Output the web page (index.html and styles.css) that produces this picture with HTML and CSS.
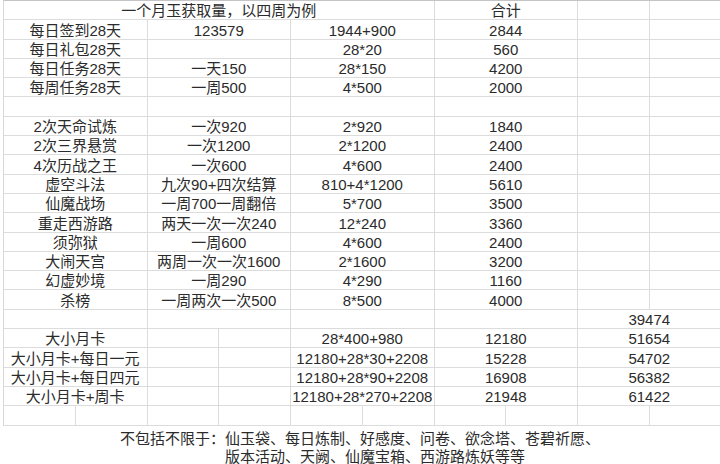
FILE: index.html
```html
<!DOCTYPE html>
<html lang="zh">
<head>
<meta charset="utf-8">
<title>一个月玉获取量</title>
<link rel="stylesheet" href="styles.css">
</head>
<body>
<div class="sheet">
  <div class="c s6">一个月玉获取量，以四周为例</div><div class="c s2">合计</div><div class="c"></div><div class="c"></div>

  <div class="c s2">每日签到28天</div><div class="c s2">123579</div><div class="c s2">1944+900</div><div class="c s2">2844</div><div class="c"></div><div class="c"></div>
  <div class="c s2">每日礼包28天</div><div class="c s2"></div><div class="c s2">28*20</div><div class="c s2">560</div><div class="c"></div><div class="c"></div>
  <div class="c s2">每日任务28天</div><div class="c s2">一天150</div><div class="c s2">28*150</div><div class="c s2">4200</div><div class="c"></div><div class="c"></div>
  <div class="c s2">每周任务28天</div><div class="c s2">一周500</div><div class="c s2">4*500</div><div class="c s2">2000</div><div class="c"></div><div class="c"></div>
  <div class="c s2"></div><div class="c s2"></div><div class="c s2"></div><div class="c s2"></div><div class="c"></div><div class="c"></div>

  <div class="c s2">2次天命试炼</div><div class="c s2">一次920</div><div class="c s2">2*920</div><div class="c s2">1840</div><div class="c"></div><div class="c"></div>
  <div class="c s2">2次三界悬赏</div><div class="c s2">一次1200</div><div class="c s2">2*1200</div><div class="c s2">2400</div><div class="c"></div><div class="c"></div>
  <div class="c s2">4次历战之王</div><div class="c s2">一次600</div><div class="c s2">4*600</div><div class="c s2">2400</div><div class="c"></div><div class="c"></div>
  <div class="c s2">虚空斗法</div><div class="c s2">九次90+四次结算</div><div class="c s2">810+4*1200</div><div class="c s2">5610</div><div class="c"></div><div class="c"></div>
  <div class="c s2">仙魔战场</div><div class="c s2">一周700一周翻倍</div><div class="c s2">5*700</div><div class="c s2">3500</div><div class="c"></div><div class="c"></div>
  <div class="c s2">重走西游路</div><div class="c s2">两天一次一次240</div><div class="c s2">12*240</div><div class="c s2">3360</div><div class="c"></div><div class="c"></div>
  <div class="c s2">须弥狱</div><div class="c s2">一周600</div><div class="c s2">4*600</div><div class="c s2">2400</div><div class="c"></div><div class="c"></div>
  <div class="c s2">大闹天宫</div><div class="c s2">两周一次一次1600</div><div class="c s2">2*1600</div><div class="c s2">3200</div><div class="c"></div><div class="c"></div>
  <div class="c s2">幻虚妙境</div><div class="c s2">一周290</div><div class="c s2">4*290</div><div class="c s2">1160</div><div class="c"></div><div class="c"></div>
  <div class="c s2">杀榜</div><div class="c s2">一周两次一次500</div><div class="c s2">8*500</div><div class="c s2">4000</div><div class="c"></div><div class="c"></div>

  <div class="c s2"></div><div class="c s2"></div><div class="c s2"></div><div class="c s2"></div><div class="c s2">39474</div>
  <div class="c s2">大小月卡</div><div class="c"></div><div class="c"></div><div class="c s2">28*400+980</div><div class="c s2">12180</div><div class="c s2">51654</div>
  <div class="c s2">大小月卡+每日一元</div><div class="c"></div><div class="c"></div><div class="c s2">12180+28*30+2208</div><div class="c s2">15228</div><div class="c s2">54702</div>
  <div class="c s2">大小月卡+每日四元</div><div class="c"></div><div class="c"></div><div class="c s2">12180+28*90+2208</div><div class="c s2">16908</div><div class="c s2">56382</div>
  <div class="c s2">大小月卡+周卡</div><div class="c"></div><div class="c"></div><div class="c s2">12180+28*270+2208</div><div class="c s2">21948</div><div class="c s2">61422</div>
  <div class="c"></div><div class="c"></div><div class="c"></div><div class="c"></div><div class="c"></div><div class="c"></div><div class="c"></div><div class="c"></div><div class="c"></div><div class="c"></div>
</div>
<div class="note">
  <span class="note-label">不包括不限于：</span>
  <span class="note-text">仙玉袋、每日炼制、好感度、问卷、欲念塔、苍碧祈愿、版本活动、天阙、仙魔宝箱、西游路炼妖等等</span>
</div>
</body>
</html>
```

FILE: styles.css
```css
html, body {
  margin: 0;
  padding: 0;
  background: #ffffff;
}
body {
  width: 720px;
  height: 464px;
  overflow: hidden;
  font-family: "Liberation Sans", "Noto Sans CJK SC", sans-serif;
  font-size: 15px;
  color: #2b2b2b;
}
.sheet {
  margin-left: 3px;
  display: grid;
  grid-template-columns: repeat(10, 71.75px);
  grid-template-rows: repeat(22, 19.3px);
  border-top: 1px solid #c4c4c4;
  border-left: 1px solid #d8d8d8;
  box-sizing: border-box;
}
.c {
  box-sizing: border-box;
  border-right: 1px solid #dcdcdc;
  border-bottom: 1px solid #dcdcdc;
  display: flex;
  align-items: flex-end;
  justify-content: center;
  line-height: 17px;
  white-space: nowrap;
  overflow: visible;
  padding-bottom: 0;
}
.s2 { grid-column: span 2; }
.s6 { grid-column: span 6; }
.note {
  display: flex;
  padding-left: 120px;
  padding-top: 4px;
  line-height: 18px;
}
.note-label {
  flex: 0 0 auto;
  white-space: nowrap;
}
.note-text {
  width: 378px;
}
```
